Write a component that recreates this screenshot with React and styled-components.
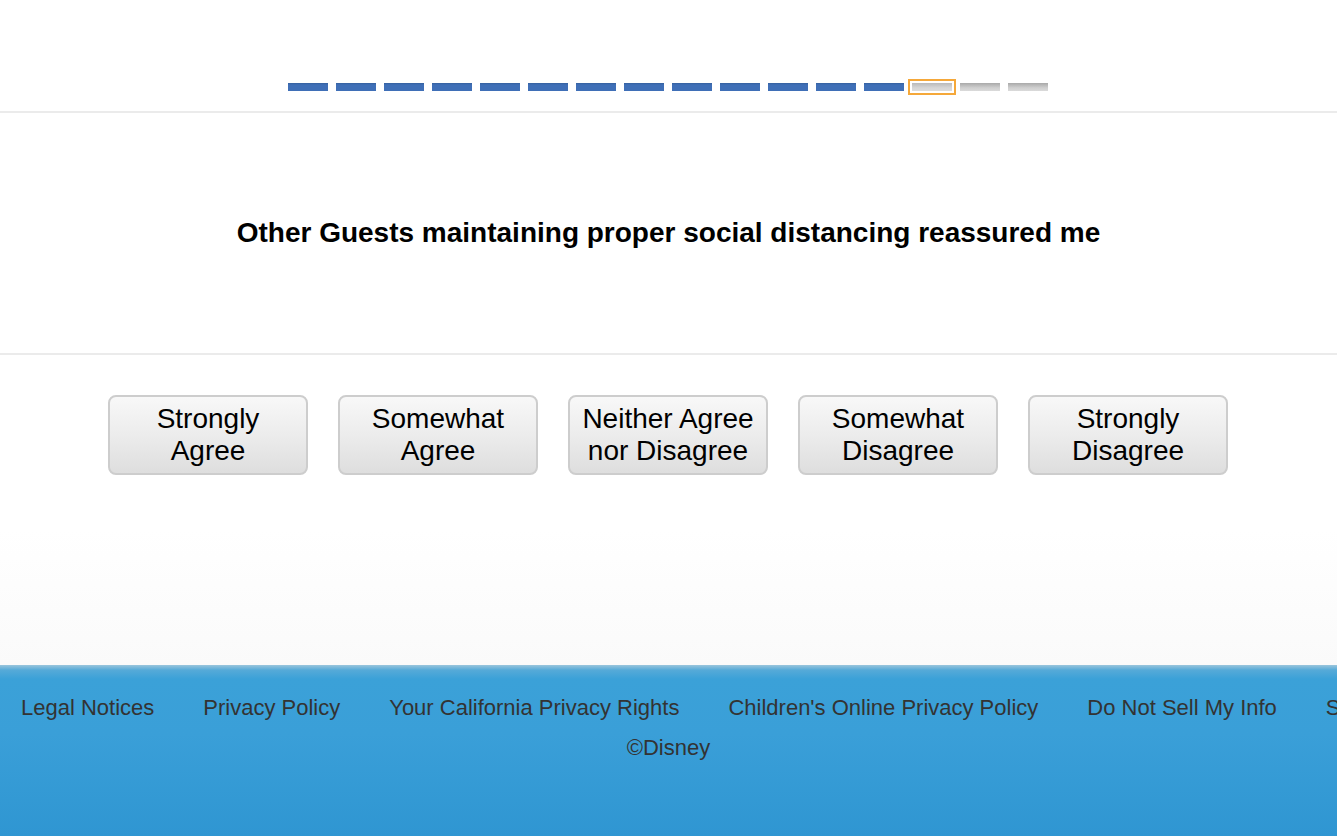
import styled, { createGlobalStyle } from "styled-components";

const GlobalStyle = createGlobalStyle`
  html, body {
    margin: 0;
    padding: 0;
    background: #fff;
    font-family: "Liberation Sans", Arial, Helvetica, sans-serif;
    overflow: hidden;
  }
`;

const Page = styled.div`
  display: flex;
  flex-direction: column;
  min-height: 836px;
`;

const Main = styled.main`
  height: 665px;
  display: flex;
  flex-direction: column;
  background: linear-gradient(to bottom, #ffffff 0, #ffffff 530px, #fafafa 665px);
`;

const ProgressArea = styled.div`
  height: 113px;
  box-sizing: border-box;
  padding: 83px 1px 0 0;
  display: flex;
  justify-content: center;
  gap: 8px;
  border-bottom: 2px solid #ebebeb;
`;

const Segment = styled.span`
  width: 40px;
  height: 8px;
  background: ${({ $state }) =>
    $state === "done"
      ? "linear-gradient(to bottom, #35609f 0, #3f6fb7 2px, #3f6fb7 100%)"
      : $state === "current"
      ? "linear-gradient(to bottom, #b9b9b9 0, #d6d6d6 60%, #dcdcdc 100%)"
      : "linear-gradient(to bottom, #a9a9a9 0, #cfcfcf 60%, #dadada 100%)"};
  outline: ${({ $state }) => ($state === "current" ? "2px solid #f5a83a" : "none")};
  outline-offset: 2px;
`;

const QuestionArea = styled.div`
  height: 242px;
  box-sizing: border-box;
  display: flex;
  align-items: center;
  justify-content: center;
  border-bottom: 2px solid #ebebeb;
`;

const Question = styled.h1`
  margin: 0;
  font-size: 28px;
  line-height: 32px;
  font-weight: bold;
  color: #000;
`;

const Answers = styled.div`
  display: flex;
  justify-content: center;
  gap: 30px;
  padding: 40px 1px 0 0;
`;

const AnswerButton = styled.button`
  width: 200px;
  height: 80px;
  box-sizing: border-box;
  border: 2px solid #cdcdcd;
  border-radius: 8px;
  background: linear-gradient(to bottom, #f8f8f8 0, #ececec 50%, #dedede 100%);
  font-family: "Liberation Sans", Arial, Helvetica, sans-serif;
  font-size: 28px;
  line-height: 32px;
  color: #000;
  padding: 0 4px;
  cursor: pointer;
`;

const Footer = styled.footer`
  flex: 1;
  min-height: 171px;
  background: linear-gradient(to bottom, #9ac5dc 0, #56aad8 5px, #3ba1d8 14px, #3a9fd8 40%, #2f96d2 100%);
  color: #333;
  padding-top: 28px;
  box-sizing: border-box;
`;

const LinkRow = styled.nav`
  display: flex;
  gap: 49px;
  padding-left: 21px;
  white-space: nowrap;
  overflow: hidden;
`;

const FooterLink = styled.a`
  font-size: 22px;
  line-height: 30px;
  color: #333;
  text-decoration: none;
`;

const Copyright = styled.div`
  text-align: center;
  font-size: 22px;
  line-height: 30px;
  margin-top: 10px;
`;

const answers = [
  ["Strongly", "Agree"],
  ["Somewhat", "Agree"],
  ["Neither Agree", "nor Disagree"],
  ["Somewhat", "Disagree"],
  ["Strongly", "Disagree"],
];

const links = [
  "Legal Notices",
  "Privacy Policy",
  "Your California Privacy Rights",
  "Children's Online Privacy Policy",
  "Do Not Sell My Info",
  "Supported Browsers",
];

export default function App() {
  const segments = Array.from({ length: 16 }, (_, i) =>
    i < 13 ? "done" : i === 13 ? "current" : "todo"
  );

  return (
    <>
      <GlobalStyle />
      <Page>
        <Main>
          <ProgressArea>
            {segments.map((s, i) => (
              <Segment key={i} $state={s} />
            ))}
          </ProgressArea>
          <QuestionArea>
            <Question>Other Guests maintaining proper social distancing reassured me</Question>
          </QuestionArea>
          <Answers>
            {answers.map(([a, b]) => (
              <AnswerButton key={a + b}>
                {a}
                <br />
                {b}
              </AnswerButton>
            ))}
          </Answers>
        </Main>
        <Footer>
          <LinkRow>
            {links.map((l) => (
              <FooterLink key={l} href="#">
                {l}
              </FooterLink>
            ))}
          </LinkRow>
          <Copyright>©Disney</Copyright>
        </Footer>
      </Page>
    </>
  );
}
